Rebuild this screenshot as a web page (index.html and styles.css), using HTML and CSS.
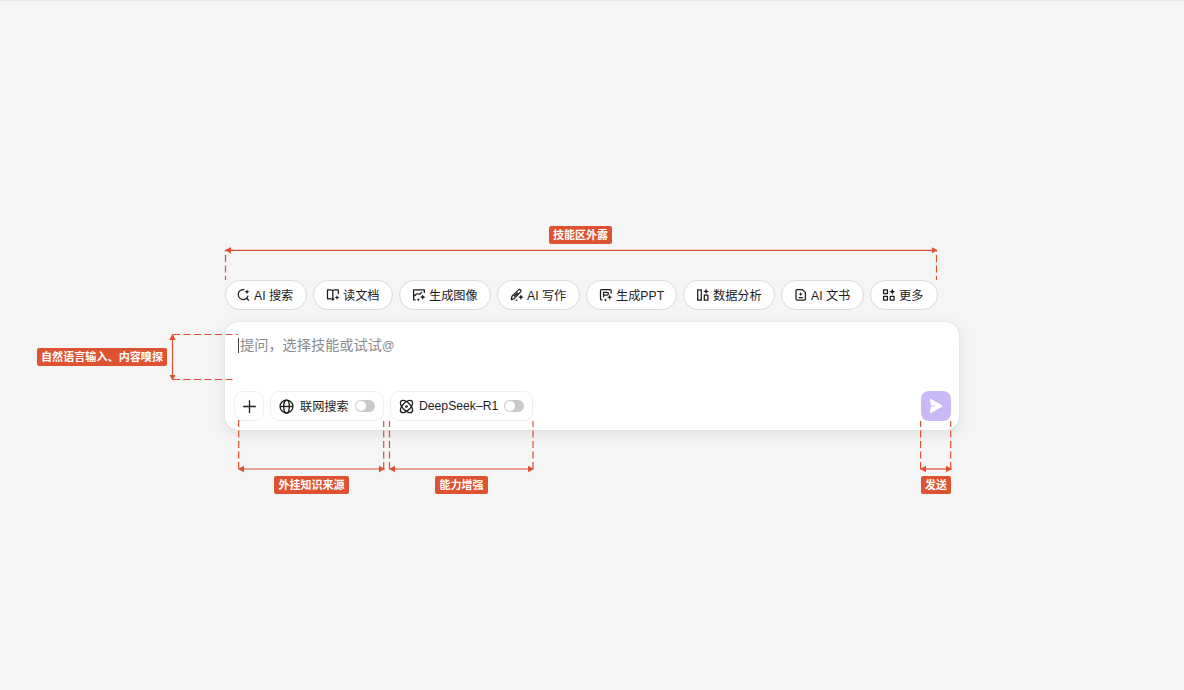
FILE: index.html
```html
<!DOCTYPE html>
<html lang="zh-CN">
<head>
<meta charset="utf-8">
<title>AI 输入框</title>
<link rel="stylesheet" href="styles.css">
</head>
<body>
<main class="canvas">
  <div class="composer">
    <nav class="skills">
      <button class="skill skill--search">
        <svg class="icon" viewBox="0 0 14 14"><path d="M7.4 1.7A5 5 0 1 0 11.1 7.6M9.6 10.2l2.3 2.3"/><path class="fill" d="M10 1.2l.7 1.8 1.8.7-1.8.7-.7 1.8-.7-1.8-1.8-.7 1.8-.7z"/></svg>
        <span>AI 搜索</span>
      </button>
      <button class="skill skill--doc">
        <svg class="icon" viewBox="0 0 14 14"><path d="M6.8 3.2C6.5 2 5.7 1.8 4.8 1.8H1.5v9h3.4c1 0 1.6.3 1.9 1.2V3.2c.3-1.1 1-1.4 2-1.4h3.5v4.5M6.8 12c.2-.7.7-1.1 1.5-1.2"/><path class="fill" d="M11 7l.6 1.8 1.8.7-1.8.7L11 12l-.7-1.8-1.8-.7 1.8-.7z"/></svg>
        <span>读文档</span>
      </button>
      <button class="skill skill--image">
        <svg class="icon" viewBox="0 0 14 14"><path d="M12.3 5V1.8H1.6v10h2M1.8 7.8c1.8-.2 1.8-1.6 3-1.9 1.4-.4 2 .7 3.2.1 1-.5.8-1.4 2-1.8"/><path class="fill" d="M10.7 6.2l.8 2.1 2.1.8-2.1.8-.8 2.1-.8-2.1-2.1-.8 2.1-.8zM6.3 10l.5 1.3 1.3.5-1.3.5-.5 1.3-.5-1.3-1.3-.5 1.3-.5z"/></svg>
        <span>生成图像</span>
      </button>
      <button class="skill skill--write">
        <svg class="icon" viewBox="0 0 14 14"><path d="M2 8.2l6.6-6.3c1.5-1.2 3.2.5 2 2L4.2 10.6l-3 1zM4 8.5l4-3.8M5.6 12.2h1.8"/><path class="fill" d="M10.9 6.2l.8 2.1 2.1.8-2.1.8-.8 2.1-.8-2.1L8 9.100l2.1-.8z"/></svg>
        <span>AI 写作</span>
      </button>
      <button class="skill skill--ppt">
        <svg class="icon" viewBox="0 0 14 14"><path d="M12.2 5.5V2.6q0-1-1-1H2.5q-1 0-1 1v8.2q0 1 1 1h1M4.6 9.3V4.3h3.3c2 0 2 2.8 0 2.8H4.8"/><path class="fill" d="M10.7 6.5l.8 2 2 .8-2 .8-.8 2-.8-2-2-.8 2-.8zM6.6 10.200l.5 1.200 1.200.5-1.200.5-.5 1.200-.5-1.200-1.200-.5 1.200-.5z"/></svg>
        <span>生成PPT</span>
      </button>
      <button class="skill skill--data">
        <svg class="icon" viewBox="0 0 14 14"><path d="M1.700 1.800h3.600v10.400H1.700zM8.300 7h3.600v5.200H8.300z"/><path class="fill" d="M10.100.6l.8 2 2 .8-2 .8-.8 2-.8-2-2-.8 2-.8z"/></svg>
        <span>数据分析</span>
      </button>
      <button class="skill skill--paper">
        <svg class="icon" viewBox="0 0 14 14"><path d="M3.200 1.600h5.200l3 2.800v6.300q0 1.300-1.300 1.300H3.200Q2 12 2 10.700V2.800q0-1.200 1.200-1.200zM4.600 9.600h4.200"/><path class="fill" d="M6.700 4l.6 1.500 1.600.6-1.600.6-.6 1.500-.6-1.500-1.600-.6 1.600-.6z"/></svg>
        <span>AI 文书</span>
      </button>
      <button class="skill skill--more">
        <svg class="icon" viewBox="0 0 14 14"><path d="M1.600 1.800h3.800v3.800H1.600zM1.600 8.300h3.800v3.800H1.600zM8.300 8.300h3.800v3.800H8.300z"/><path class="fill" d="M10.300.7l.9 2.100 2.100.9-2.100.9-.9 2.100-.9-2.100-2.100-.9 2.100-.9z"/></svg>
        <span>更多</span>
      </button>
    </nav>

    <section class="input-card">
      <div class="prompt"><i class="caret"></i><span>提问，选择技能或试试<span class="at">@</span></span></div>
      <div class="toolbar">
        <button class="tool tool--add">
          <svg class="icon icon--tool" viewBox="0 0 16 16"><path d="M8 1.200v13.600M1.200 8h13.600"/></svg>
        </button>
        <button class="tool tool--web">
          <svg class="icon icon--tool" viewBox="0 0 16 16"><circle cx="8" cy="8" r="6.900"/><ellipse cx="8" cy="8" rx="3" ry="6.900"/><path d="M1.300 8h13.400"/></svg>
          <span>联网搜索</span><i class="switch"></i>
        </button>
        <button class="tool tool--model">
          <svg class="icon icon--tool" viewBox="0 0 16 16"><ellipse cx="8" cy="8" rx="8.200" ry="4.200" transform="rotate(45 8 8)"/><ellipse cx="8" cy="8" rx="8.200" ry="4.200" transform="rotate(-45 8 8)"/><circle class="fill" cx="8" cy="8" r="1.400"/></svg>
          <span>DeepSeek–R1</span><i class="switch"></i>
        </button>
        <button class="send">
          <svg class="send-icon" viewBox="0 0 14 16"><path d="M.9 1.300Q.8.500 1.600.8L13 7.200q1 .8 0 1.600L1.600 15.200q-.8.300-.7-.5L2 8.500h4.300v-1H2z"/></svg>
        </button>
      </div>
    </section>
  </div>

  <svg class="guides" viewBox="0 0 1184 690">
    <defs>
      <marker id="arrow" markerUnits="userSpaceOnUse" markerWidth="6" markerHeight="7" refX="5.500" refY="3.500" orient="auto-start-reverse"><path d="M0 .2L6 3.500L0 6.800z"/></marker>
    </defs>
    <g class="measure">
      <path d="M225.500 250.300H937"/>
      <path d="M172.500 334.500V380"/>
      <path d="M238.500 469H384.500"/>
      <path d="M389.500 469H533.500"/>
      <path d="M920.500 469H951.500"/>
    </g>
    <g class="dash">
      <path d="M225.500 280V250" stroke-dashoffset="3"/>
      <path d="M936.500 280V250" stroke-dashoffset="3"/>
      <path d="M173 334.500H238"/>
      <path d="M173 379.500H234"/>
      <path d="M238.700 469V417"/>
      <path d="M383.700 469V421"/>
      <path d="M389.500 469V421"/>
      <path d="M533 469V421"/>
      <path d="M920.600 469V421"/>
      <path d="M950.700 469V421"/>
    </g>
  </svg>
  <span class="tag tag--skills">技能区外露</span>
  <span class="tag tag--prompt">自然语言输入、内容嗅探</span>
  <span class="tag tag--source">外挂知识来源</span>
  <span class="tag tag--ability">能力增强</span>
  <span class="tag tag--send">发送</span>
</main>
</body>
</html>
```
FILE: styles.css
```css
* { box-sizing: border-box; }
body {
  margin: 0;
  font-family: "Liberation Sans", "Noto Sans CJK SC", sans-serif;
  color: #1c1c1c;
}
button { font: inherit; color: inherit; padding: 0; margin: 0; }
.canvas {
  position: relative;
  width: 1184px;
  height: 690px;
  padding: 279px 0 0 225px;
  background: #f5f5f5;
  border-top: 1px solid #e6e6e6;
  overflow: hidden;
}
.composer { width: 734px; display: flex; flex-direction: column; gap: 12px; }
.skills { display: flex; gap: 6px; }
.skill {
  display: flex;
  align-items: center;
  gap: 3px;
  height: 30px;
  padding-left: 12px;
  border: 1px solid #dadada;
  border-radius: 15px;
  background: #fff;
  font-size: 12.2px;
  line-height: 18px;
  white-space: nowrap;
}
.skill span { padding-top: 1px; }
.skill--search { width: 82px; padding-left: 11px; }
.skill--doc { width: 80px; }
.skill--image { width: 92px; }
.skill--write { width: 83px; }
.skill--ppt { width: 91px; }
.skill--data { width: 92px; }
.skill--paper { width: 83px; }
.skill--more { width: 68px; padding-left: 11px; }
.icon {
  flex: none;
  width: 14px;
  height: 14px;
  fill: none;
  stroke: #1c1c1c;
  stroke-width: 1.25;
  stroke-linejoin: round;
}
.icon .fill { fill: #1c1c1c; stroke: none; }
.icon--tool { width: 15px; height: 15px; stroke-width: 1.4; }
.input-card {
  display: flex;
  flex-direction: column;
  justify-content: space-between;
  height: 108px;
  padding: 13px 8px 9px 9px;
  border-radius: 13px;
  background: #fff;
  box-shadow: 0 0 1px rgba(0, 0, 0, .22), 0 4px 14px rgba(0, 0, 0, .09);
}
.prompt {
  display: flex;
  align-items: center;
  height: 20px;
  padding-left: 4px;
  gap: 1px;
  color: #8b8b8b;
  font-size: 14.2px;
  line-height: 20px;
}
.at { font-size: 12.4px; }
.caret { width: 1px; height: 15px; background: #444; }
.toolbar { display: flex; align-items: center; gap: 6px; height: 30px; }
.tool {
  display: flex;
  align-items: center;
  height: 30px;
  padding: 0 8px 0 9px;
  border: 1px solid #eee;
  border-radius: 9px;
  background: #fff;
  font-size: 12.2px;
  white-space: nowrap;
}
.tool span { margin-left: 6px; }
.tool--add { width: 30px; padding: 0; justify-content: center; }
.tool--web { width: 114px; padding-left: 8px; }
.tool--model { width: 143px; padding-left: 8px; }
.tool--model span { margin-left: 5px; }
.switch {
  width: 20px;
  height: 12px;
  margin-left: auto;
  padding: 1px;
  border-radius: 6px;
  background: #c9c9c9;
}
.switch::before {
  content: "";
  display: block;
  width: 10px;
  height: 10px;
  border-radius: 50%;
  background: #fff;
}
.send {
  display: flex;
  align-items: center;
  justify-content: center;
  width: 30px;
  height: 30px;
  margin-left: auto;
  border: 0;
  border-radius: 8px;
  background: #c8b8f5;
}
.send-icon { width: 14px; height: 16px; fill: #fff; }
.guides { position: absolute; left: 0; top: -1px; width: 1184px; height: 690px; pointer-events: none; }
.guides marker path { fill: #dc5230; stroke: none; }
.measure path { fill: none; stroke: #dc5230; stroke-width: 1.2; marker-start: url(#arrow); marker-end: url(#arrow); }
.dash path { fill: none; stroke: #dc5230; stroke-width: 1.2; stroke-dasharray: 7 3.5; }
.tag {
  position: absolute;
  height: 18px;
  border-radius: 2px;
  background: #dd5230;
  color: #fff;
  font-size: 11px;
  font-weight: 700;
  line-height: 19px;
  text-align: center;
  white-space: nowrap;
}
.tag--skills { left: 549px; top: 225px; width: 63px; }
.tag--prompt { left: 37px; top: 347px; width: 130px; font-size: 11.1px; }
.tag--source { left: 274px; top: 475px; width: 75px; }
.tag--ability { left: 435px; top: 475px; width: 53px; }
.tag--send { left: 921px; top: 475px; width: 30px; }
```
